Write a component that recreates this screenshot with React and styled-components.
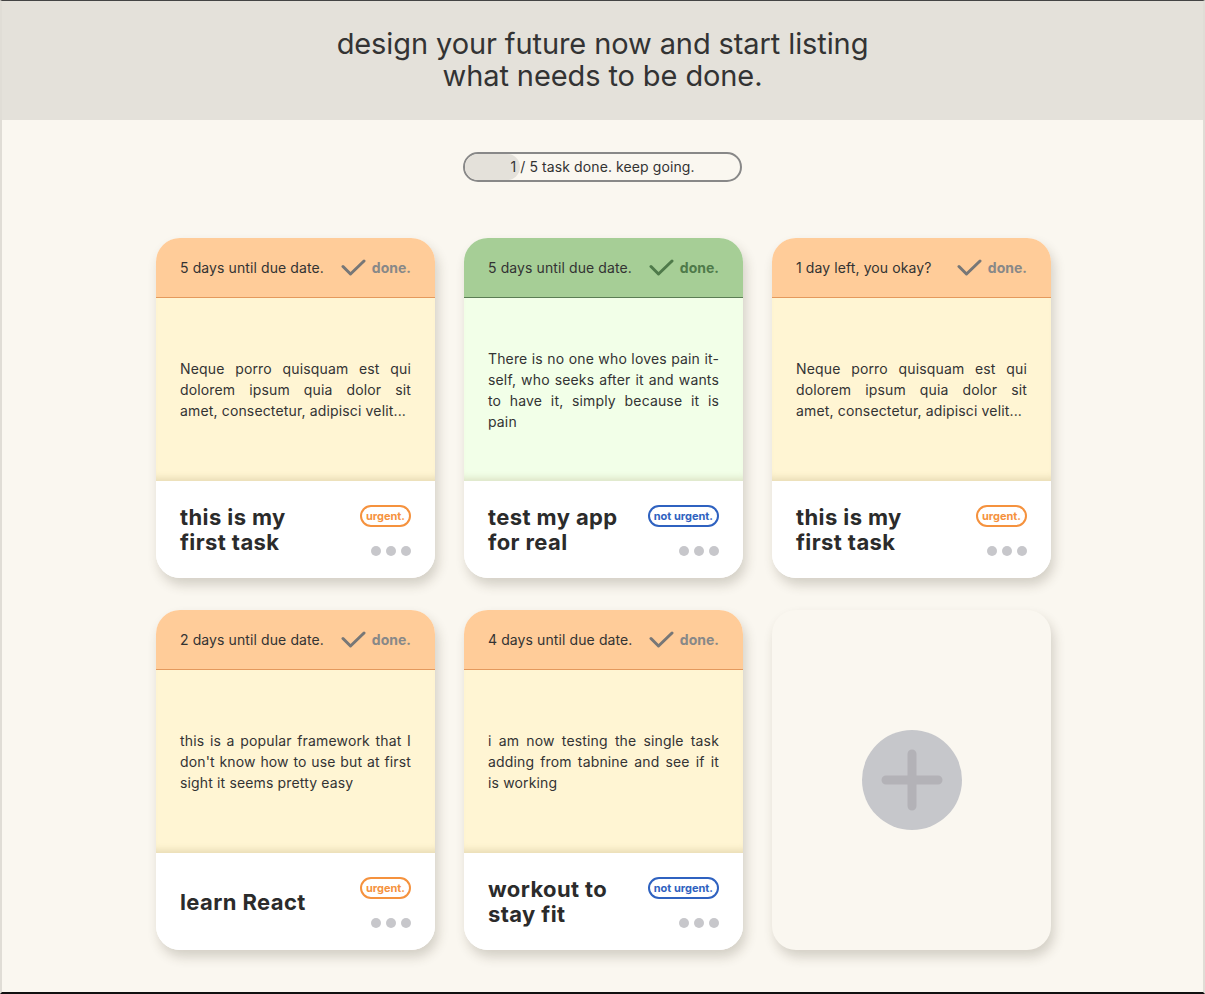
import React from 'react';
import styled, { createGlobalStyle } from 'styled-components';

const GlobalStyle = createGlobalStyle`
  html, body {
    margin: 0;
    padding: 0;
  }
  body {
    font-family: Inter, "Noto Sans", sans-serif;
    color: #333;
    background: #faf7f0;
  }
  * { box-sizing: border-box; }
`;

const tasks = [
  {
    id: 1,
    due: '5 days until due date.',
    text: 'Neque porro quisquam est qui dolorem ipsum quia dolor sit amet, consectetur, adipisci velit...',
    title: ['this is my', 'first task'],
    urgent: true,
    done: false,
  },
  {
    id: 2,
    due: '5 days until due date.',
    text: 'There is no one who loves pain it-self, who seeks after it and wants to have it, simply because it is pain',
    title: ['test my app', 'for real'],
    urgent: false,
    done: true,
  },
  {
    id: 3,
    due: '1 day left, you okay?',
    text: 'Neque porro quisquam est qui dolorem ipsum quia dolor sit amet, consectetur, adipisci velit...',
    title: ['this is my', 'first task'],
    urgent: true,
    done: false,
  },
  {
    id: 4,
    due: '2 days until due date.',
    text: "this is a popular framework that I don't know how to use but at first sight it seems pretty easy",
    title: ['learn React'],
    urgent: true,
    done: false,
  },
  {
    id: 5,
    due: '4 days until due date.',
    text: 'i am now testing the single task adding from tabnine and see if it is working',
    title: ['workout to', 'stay fit'],
    urgent: false,
    done: false,
  },
];

const App = () => {
  const doneCount = tasks.filter((t) => t.done).length;
  return (
    <Page>
      <GlobalStyle />
      <Hero>
        <h1>
          design your future now and start listing
          <br />
          what needs to be done.
        </h1>
      </Hero>
      <Progress>
        <ProgressFill style={{ width: `${(doneCount / tasks.length) * 100}%` }} />
        <span>{doneCount} / {tasks.length} task done. keep going.</span>
      </Progress>
      <Grid>
        {tasks.map((task) => (
          <Card key={task.id}>
            <CardHead done={task.done}>
              <span>{task.due}</span>
              <DoneButton done={task.done}>
                <svg width="25" height="18" viewBox="0 0 25 18" fill="none">
                  <path d="M2 7.5 L9.5 15 L23 2" stroke="currentColor" strokeWidth="3" strokeLinecap="round" strokeLinejoin="round" />
                </svg>
                done.
              </DoneButton>
            </CardHead>
            <CardBody done={task.done}>
              <p>{task.text}</p>
            </CardBody>
            <CardFoot>
              <Title>
                {task.title.map((line) => (
                  <div key={line}>{line}</div>
                ))}
              </Title>
              <Side>
                <Badge urgent={task.urgent}>{task.urgent ? 'urgent.' : 'not urgent.'}</Badge>
                <Dots>
                  <i />
                  <i />
                  <i />
                </Dots>
              </Side>
            </CardFoot>
          </Card>
        ))}
        <AddCard>
          <AddButton>
            <svg width="62" height="62" viewBox="0 0 62 62">
              <path d="M31 5 V57 M5 31 H57" stroke="#b3b2b7" strokeWidth="9" strokeLinecap="round" />
            </svg>
          </AddButton>
        </AddCard>
      </Grid>
    </Page>
  );
};

const Page = styled.div`
  height: 994px;
  border-top: 1px solid #444;
  border-left: 2px solid #e0ddd6;
  border-right: 2px solid #e0ddd6;
  border-bottom: 2px solid #111;
  background: #faf7f0;
  overflow: hidden;
`;

const Hero = styled.header`
  height: 119px;
  background: #e4e1da;
  display: flex;
  align-items: center;
  justify-content: center;
  h1 {
    margin: 0;
    padding-bottom: 1px;
    font-size: 29px;
    font-weight: 400;
    line-height: 32px;
    letter-spacing: -0.1px;
    text-align: center;
    color: #333;
  }
`;

const Progress = styled.div`
  position: relative;
  width: 279px;
  height: 30px;
  margin: 32px auto 0;
  border: 2px solid #888;
  border-radius: 15px;
  overflow: hidden;
  display: flex;
  align-items: center;
  justify-content: center;
  span {
    position: relative;
    top: -1px;
    font-size: 14px;
    letter-spacing: 0.1px;
    color: #333;
  }
`;

const ProgressFill = styled.div`
  position: absolute;
  left: 0;
  top: 0;
  bottom: 0;
  background: #e4e1da;
  border-radius: 0 15px 15px 0;
`;

const Grid = styled.main`
  display: grid;
  grid-template-columns: repeat(3, 279px);
  grid-auto-rows: 340px;
  column-gap: 29px;
  row-gap: 32px;
  justify-content: center;
  margin: 56px 0 0 2px;
`;

const Card = styled.article`
  display: flex;
  flex-direction: column;
  border-radius: 24px;
  background: #fff;
  box-shadow: 3px 7px 12px rgba(60, 50, 30, 0.2);
  overflow: hidden;
`;

const CardHead = styled.div`
  height: 60px;
  flex-shrink: 0;
  padding: 0 24px;
  display: flex;
  align-items: center;
  justify-content: space-between;
  font-size: 14px;
  letter-spacing: 0.1px;
  color: #333;
  background: ${(p) => (p.done ? '#a6ce96' : '#ffcc99')};
  border-bottom: 1px solid ${(p) => (p.done ? '#5b7d54' : '#e4995d')};
`;

const DoneButton = styled.div`
  display: flex;
  align-items: center;
  gap: 6px;
  font-weight: 700;
  font-size: 14px;
  letter-spacing: 0;
  color: ${(p) => (p.done ? '#4f7a4a' : '#888')};
  svg {
    color: ${(p) => (p.done ? '#4f7a4a' : '#777')};
  }
`;

const CardBody = styled.div`
  flex: 1;
  display: flex;
  align-items: center;
  padding: 0 24px;
  background: ${(p) => (p.done ? '#f2ffe8' : '#fff5d3')};
  box-shadow: inset 0 -8px 7px -5px rgba(120, 100, 40, 0.18);
  p {
    margin: 0;
    font-size: 14px;
    line-height: 21px;
    letter-spacing: 0.15px;
    text-align: justify;
    color: #333;
  }
`;

const CardFoot = styled.div`
  height: 97px;
  flex-shrink: 0;
  padding: 24px 24px 22px;
  display: flex;
  align-items: center;
  justify-content: space-between;
  background: #fff;
`;

const Title = styled.div`
  font-size: 22px;
  font-weight: 700;
  line-height: 25px;
  letter-spacing: 0.4px;
  color: #2b2b2b;
  margin-top: -1px;
`;

const Side = styled.div`
  align-self: stretch;
  display: flex;
  flex-direction: column;
  align-items: flex-end;
  justify-content: space-between;
`;

const Badge = styled.span`
  display: inline-block;
  padding: 2px 4px;
  font-size: 11px;
  font-weight: 700;
  line-height: 14px;
  border-radius: 11px;
  border: 2px solid ${(p) => (p.urgent ? '#f5923e' : '#2f62c0')};
  color: ${(p) => (p.urgent ? '#f5923e' : '#2f62c0')};
  background: #fff;
`;

const Dots = styled.div`
  display: flex;
  gap: 5px;
  i {
    display: block;
    width: 10px;
    height: 10px;
    border-radius: 50%;
    background: #c7c7cb;
  }
`;

const AddCard = styled.div`
  display: flex;
  align-items: center;
  justify-content: center;
  border-radius: 24px;
  background: #faf7f0;
  box-shadow: 3px 7px 12px rgba(60, 50, 30, 0.2);
`;

const AddButton = styled.button`
  width: 100px;
  height: 100px;
  border: none;
  border-radius: 50%;
  background: #c6c7cb;
  display: flex;
  align-items: center;
  justify-content: center;
  padding: 0;
  cursor: pointer;
`;

export default App;
